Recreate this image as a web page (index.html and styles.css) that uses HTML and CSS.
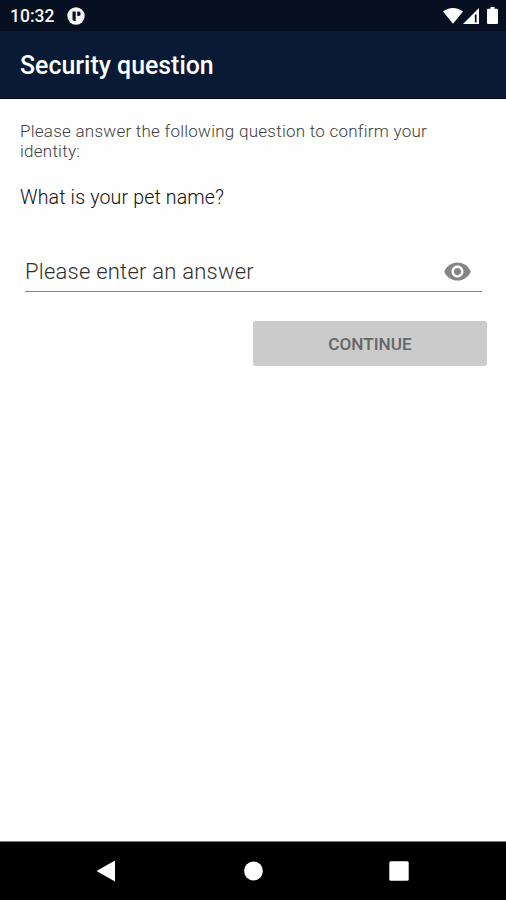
FILE: index.html
```html
<!DOCTYPE html>
<html lang="en">
<head>
<meta charset="utf-8">
<title>Security question</title>
<link rel="stylesheet" href="styles.css">
</head>
<body>
<div class="status-bar">
  <span class="clock">10:32</span>
  <svg class="notification" viewBox="0 0 18 18"><circle cx="9" cy="9" r="8.700" fill="#f4f5f7"/><path d="M5.500 4.500h3.200v9.500H7q-1.500-.5-1.500-2zM10.300 4.500h1.200a2.200 2.200 0 0 1 0 4.400h-1.200z" fill="#061020"/></svg>
  <div class="status-icons">
    <svg class="wifi" viewBox="0 0 20 16"><path d="M10 15.800L0 3.600Q4.300 0 10 0T20 3.600z" fill="#fff"/></svg>
    <svg class="signal" viewBox="0 0 16 16"><path d="M16 0V16H0z" fill="#fff"/><path d="M11.800 6.500H13.600V14.400H11.800z" fill="#061020"/></svg>
    <svg class="battery" viewBox="0 0 11 17"><path d="M3.500 0h4v1.800H10q1 0 1 1V16q0 1-1 1H1q-1 0-1-1V2.800q0-1 1-1h2.500z" fill="#fff"/></svg>
  </div>
</div>
<header class="app-bar"><h1>Security question</h1></header>
<main>
  <p class="intro">Please answer the following question to confirm your<br>identity:</p>
  <p class="question">What is your pet name?</p>
  <div class="field">
    <span class="placeholder">Please enter an answer</span>
    <svg class="eye" viewBox="0 0 24 24"><path fill="#858585" d="M12 4.500C7 4.500 2.730 7.610 1 12c1.730 4.390 6 7.500 11 7.500s9.270-3.110 11-7.500c-1.730-4.390-6-7.500-11-7.500zM12 17c-2.760 0-5-2.240-5-5s2.240-5 5-5 5 2.240 5 5-2.240 5-5 5zm0-8c-1.660 0-3 1.340-3 3s1.340 3 3 3 3-1.340 3-3-1.340-3-3-3z"/></svg>
  </div>
  <button class="continue">CONTINUE</button>
</main>
<nav>
  <svg viewBox="0 0 24 24"><path d="M1.500 12L20 1.500V22.500z" fill="#fff"/></svg>
  <svg viewBox="0 0 24 24"><circle cx="12.500" cy="12" r="9.400" fill="#fff"/></svg>
  <svg viewBox="0 0 24 24"><rect x="2.300" y="2.300" width="19.400" height="19.400" rx="1.500" fill="#fff"/></svg>
</nav>
</body>
</html>
```
FILE: styles.css
```css
* { box-sizing: border-box; }
body {
  margin: 0;
  height: 900px;
  display: flex;
  flex-direction: column;
  background: #fefefe;
  font-family: Roboto, "Liberation Sans", sans-serif;
  overflow: hidden;
}
svg { display: block; flex: none; }
.status-bar {
  height: 31px;
  padding: 0 8px 0 10px;
  display: flex;
  align-items: center;
  background: #061020;
  color: #f4f5f7;
}
.clock { width: 57px; padding-top: 1px; font-size: 17.5px; font-weight: 500; line-height: 31px; }
.notification { width: 18px; height: 18px; }
.status-icons { display: flex; align-items: center; margin-left: auto; }
.wifi { width: 20px; height: 16px; }
.signal { width: 16px; height: 16px; }
.battery { width: 11px; height: 17px; margin-left: 8px; }
.app-bar {
  height: 68px;
  padding: 2px 0 0 20px;
  display: flex;
  align-items: center;
  background: #091a35;
  border-bottom: 1px solid #050b18;
}
h1 { margin: 0; color: #fff; font-size: 24.9px; font-weight: 500; line-height: 30px; }
main { flex: 1; padding: 22px 19px 0 20px; display: flex; flex-direction: column; }
p { margin: 0; }
.intro { font-size: 17px; font-weight: 300; line-height: 20px; color: #404040; letter-spacing: .25px; white-space: nowrap; }
.question { margin-top: 24px; font-size: 19.6px; font-weight: 300; line-height: 26px; color: #101010; letter-spacing: .14px; }
.field {
  height: 42px;
  margin: 39px 5px 0;
  padding: 2px 10px 0 0;
  display: flex;
  align-items: center;
  justify-content: space-between;
  border-bottom: 1px solid #858585;
}
.placeholder { font-size: 22px; font-weight: 300; line-height: 38px; color: #303030; letter-spacing: .23px; }
.eye { width: 29px; height: 29px; }
.continue {
  width: 234px;
  height: 45px;
  margin-top: 29px;
  align-self: flex-end;
  padding: 0;
  border: 0;
  border-radius: 3px;
  background: #cbcbcb;
  color: #666;
  font-family: inherit;
  font-size: 17.2px;
  font-weight: 500;
}
nav {
  height: 59px;
  padding: 0 95px;
  display: flex;
  align-items: center;
  justify-content: space-between;
  background: #000;
  border-top: 1px solid #777;
}
nav svg { width: 24px; height: 24px; }
```
